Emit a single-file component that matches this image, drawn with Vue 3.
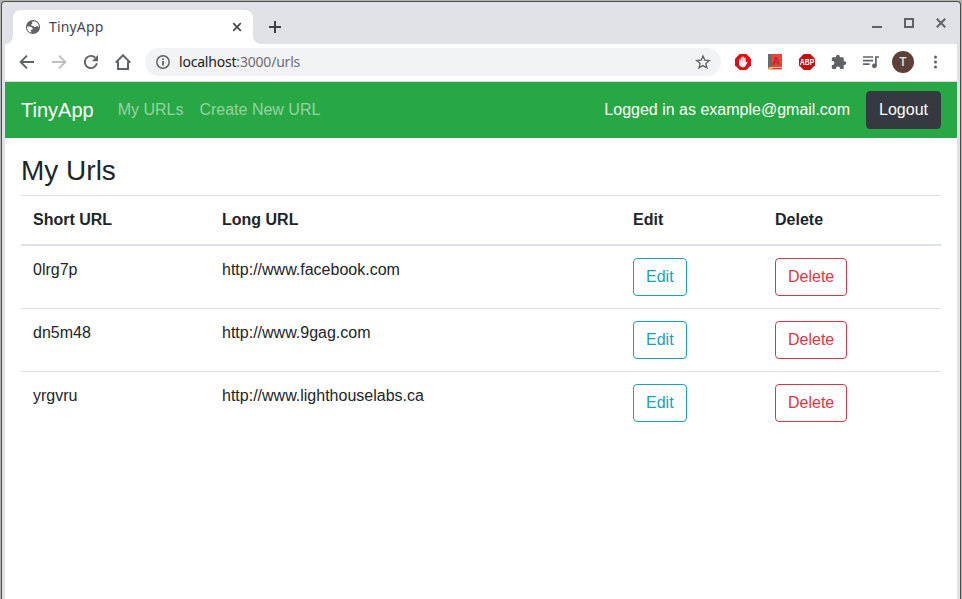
<script setup>
const rows = [
  { id: '0lrg7p', url: 'http://www.facebook.com' },
  { id: 'dn5m48', url: 'http://www.9gag.com' },
  { id: 'yrgvru', url: 'http://www.lighthouselabs.ca' },
]
</script>

<template>
  <div class="desktop">
    <div class="window">
      <header class="tabstrip">
        <div class="tab">
          <svg class="globe" width="16" height="16" viewBox="0 0 16 16">
            <circle cx="8" cy="8" r="7.1" fill="#5f6368" />
            <path d="M9.2 2.3C7.7 2.2 6.8 3 7.2 4.2 7.5 5 6.3 5.1 6 5.9 5.8 6.6 7 6.6 7.7 6.7 8.8 6.8 8.9 8 10 8.1 11.1 8.2 11 7 12.2 7.1L13.9 8.3C14 5.2 12 2.9 9.2 2.3ZM2.1 7.5C3.6 7.2 6.5 7.5 7.5 8.9 8.2 10 7.4 10.7 6.4 10.8 5.4 10.9 5.5 12 6.2 12.8 6.6 13.3 6.3 13.7 5.8 13.6 3.2 12.8 1.8 10.3 2.1 7.5Z" fill="#fff" />
          </svg>
          <span class="tab-title">TinyApp</span>
          <svg class="tab-close" width="10" height="10" viewBox="0 0 10 10">
            <path d="M1.2 1.2l7.6 7.6M8.8 1.2L1.2 8.8" stroke="#45494d" stroke-width="1.7" />
          </svg>
        </div>
        <svg class="plus" width="14" height="14" viewBox="0 0 14 14">
          <path d="M7 1v12M1 7h12" stroke="#3c4043" stroke-width="2" />
        </svg>
        <div class="controls">
          <svg width="12" height="12" viewBox="0 0 12 12"><path d="M1 10h10" stroke="#5f6368" stroke-width="2" /></svg>
          <svg width="12" height="12" viewBox="0 0 12 12"><rect x="2" y="2" width="8" height="8" fill="none" stroke="#5f6368" stroke-width="2" /></svg>
          <svg width="12" height="12" viewBox="0 0 12 12"><path d="M1.8 1.8l8.4 8.4M10.2 1.8l-8.4 8.4" stroke="#5f6368" stroke-width="2" /></svg>
        </div>
      </header>

      <div class="toolbar">
        <div class="nav-icons">
          <svg width="16" height="16" viewBox="0 0 16 16"><path d="M15 8H2.2M8 1.6L1.6 8 8 14.4" fill="none" stroke="#5f6368" stroke-width="1.9" /></svg>
          <svg width="16" height="16" viewBox="0 0 16 16"><path d="M1 8h12.8M8 1.6L14.4 8 8 14.4" fill="none" stroke="#bdc0c3" stroke-width="1.9" /></svg>
          <svg width="16" height="16" viewBox="0 0 16 16">
            <path d="M13.9 9.3A6.1 6.1 0 1 1 12.3 3.7" fill="none" stroke="#5f6368" stroke-width="1.9" />
            <path d="M15 1v6.2H8.8z" fill="#5f6368" />
          </svg>
          <svg width="16" height="16" viewBox="0 0 16 16"><path d="M.7 8.6L8 1.3l7.3 7.3M3 7.5V15h10V7.5" fill="none" stroke="#5f6368" stroke-width="2" /></svg>
        </div>
        <div class="omnibox">
          <svg class="info" width="14" height="14" viewBox="0 0 14 14">
            <circle cx="7" cy="7" r="6.2" fill="none" stroke="#5f6368" stroke-width="1.5" />
            <path d="M7 6.1v4.4M7 3.4v1.7" stroke="#5f6368" stroke-width="1.8" />
          </svg>
          <span class="address"><span class="host">localhost</span>:3000/urls</span>
          <svg class="star" width="16" height="16" viewBox="0 0 16 16">
            <path d="M8 1.9l1.75 4.2 4.55.4-3.45 3 1.05 4.45L8 11.6l-3.9 2.35L5.15 9.5 1.7 6.5l4.55-.4z" fill="none" stroke="#5f6368" stroke-width="1.35" />
          </svg>
        </div>
        <div class="extensions">
          <svg width="16" height="16" viewBox="0 0 16 16">
            <path d="M4.7 0h6.6L16 4.7v6.6L11.3 16H4.7L0 11.3V4.7z" fill="#e40d13" />
            <path d="M4.8 6v3M6.5 3.8V9M8.2 3.1V9M9.9 4.1V9" stroke="#fff" stroke-width="1.35" stroke-linecap="round" />
            <path d="M4.1 7.6h6.5v1.7l.9-1.2c.5-.5 1.2-.1.9.5L10.5 12c-.5.9-1.2 1.3-2.4 1.3-2.5 0-4-1.4-4-3.8z" fill="#fff" />
          </svg>
          <svg class="book" width="16" height="16" viewBox="0 0 16 16">
            <path d="M1 0h4v13l-2 2H1z" fill="#666b70" />
            <path d="M4.5 0H15v13H4.5z" fill="#ee4437" />
            <path d="M4.5 13H15v1H4.5z" fill="#d9cbc6" />
            <path d="M3 14h12v1.4H3z" fill="#d93a30" />
            <path d="M1.6 13h3.8v3l-1.9-1-1.9 1z" fill="#f5bd32" />
            <text x="9" y="11.2" text-anchor="middle" class="book-letter">A</text>
          </svg>
          <svg width="16" height="16" viewBox="0 0 16 16">
            <path d="M4.7 0h6.6L16 4.7v6.6L11.3 16H4.7L0 11.3V4.7z" fill="#c70d0e" />
            <text x="8" y="11" text-anchor="middle" textLength="14.6" lengthAdjust="spacingAndGlyphs" class="abp">ABP</text>
          </svg>
          <svg width="16" height="16" viewBox="0 0 16 16">
            <path d="M.8 4.4Q.8 3.2 2 3.2H5V2.7a1.9 1.9 0 0 1 3.8 0v.5h2.8q1.2 0 1.2 1.2v2.8h.6a1.9 1.9 0 0 1 0 3.8h-.6v2.7q0 1.2-1.2 1.2H9v-.5a2 2 0 0 0-4 0v.5H2q-1.2 0-1.2-1.2V11h.6a2 2 0 0 0 0-4H.8z" fill="#5f6368" />
          </svg>
          <svg width="16" height="16" viewBox="0 0 16 16">
            <path d="M0 3h10M0 6.6h10M0 10.2h6.6M12.9 12V3H16" fill="none" stroke="#5f6368" stroke-width="1.7" />
            <circle cx="11.4" cy="11.8" r="2.4" fill="#5f6368" />
          </svg>
        </div>
        <span class="avatar">T</span>
        <svg class="more" width="4" height="14" viewBox="0 0 4 14">
          <g fill="#5f6368"><circle cx="2.5" cy="2" r="1.5" /><circle cx="2.5" cy="7" r="1.5" /><circle cx="2.5" cy="12" r="1.5" /></g>
        </svg>
      </div>

      <div class="page">
        <nav class="navbar">
          <a class="brand">TinyApp</a>
          <a class="link">My URLs</a>
          <a class="link">Create New URL</a>
          <span class="user">Logged in as example@gmail.com</span>
          <button class="btn dark">Logout</button>
        </nav>
        <main>
          <h3>My Urls</h3>
          <div class="row head">
            <span>Short URL</span><span>Long URL</span><span>Edit</span><span>Delete</span>
          </div>
          <div v-for="row in rows" :key="row.id" class="row">
            <span>{{ row.id }}</span>
            <span>{{ row.url }}</span>
            <div><button class="btn info-btn">Edit</button></div>
            <div><button class="btn danger">Delete</button></div>
          </div>
        </main>
      </div>
    </div>
  </div>
</template>

<style>
body {
  overflow: hidden;
}
</style>

<style scoped>
* {
  box-sizing: border-box;
}
svg {
  display: block;
  flex: none;
}
.desktop {
  height: 599px;
  padding: 1px 1px 0;
  background: #b3b4b0;
  font-family: "Liberation Sans", Arial, sans-serif;
  font-size: 16px;
  line-height: 24px;
  color: #212529;
}
.window {
  height: 598px;
  display: flex;
  flex-direction: column;
  border: 1px solid #4d4e50;
  border-bottom: 0;
  border-radius: 4px 4px 0 0;
  background: #dee1e6;
  padding: 0 3px;
}
.tabstrip {
  height: 42px;
  flex: none;
  display: flex;
  padding-left: 8px;
}
.tab {
  position: relative;
  width: 240px;
  height: 34px;
  margin-top: 8px;
  display: flex;
  align-items: center;
  padding: 0 11px 0 12px;
  border-radius: 8px 8px 0 0;
  background: #fff;
}
.tab::before,
.tab::after {
  content: "";
  position: absolute;
  bottom: 0;
  width: 8px;
  height: 8px;
}
.tab::before {
  left: -8px;
  background: radial-gradient(circle at 0 0, transparent 7.5px, #fff 8.3px);
}
.tab::after {
  right: -8px;
  background: radial-gradient(circle at 100% 0, transparent 7.5px, #fff 8.3px);
}
.tab-title {
  margin-left: 8px;
  font: 14px/20px "Noto Sans", sans-serif;
  letter-spacing: 0.15px;
  color: #45494d;
}
.tab-close {
  margin-left: auto;
}
.plus {
  margin: 18px 0 0 15px;
}
.controls {
  display: flex;
  gap: 20px;
  margin: 15px 10px 0 auto;
}
.toolbar {
  height: 38px;
  flex: none;
  display: flex;
  align-items: center;
  padding: 0 20px 2px 14px;
  background: #fff;
  border-bottom: 1px solid #dadce0;
}
.nav-icons,
.extensions {
  display: flex;
  gap: 16px;
}
.omnibox {
  width: 576px;
  height: 28px;
  margin: 0 14px;
  display: flex;
  align-items: center;
  padding: 0 10px 0 11px;
  border-radius: 14px;
  background: #f1f3f4;
}
.address {
  margin-left: 9px;
  font: 14px/20px "Noto Sans", sans-serif;
  letter-spacing: -0.2px;
  color: #6b6f73;
}
.host {
  color: #202124;
}
.star {
  margin-left: auto;
}
.book-letter {
  font: bold 11px "Liberation Sans", sans-serif;
  fill: #b52e27;
}
.abp {
  font: bold 8.5px "Liberation Sans", sans-serif;
  fill: #fff;
}
.avatar {
  width: 22px;
  height: 22px;
  margin-left: 13px;
  border-radius: 50%;
  background: #5d4037;
  color: #e8e2e0;
  font: 500 12px/22px Roboto, sans-serif;
  text-align: center;
}
.more {
  margin-left: auto;
}
.page {
  flex: 1;
  background: #fff;
}
.navbar {
  height: 56px;
  display: flex;
  align-items: center;
  padding: 0 16px;
  background: #28a745;
}
.brand {
  margin-right: 24px;
  font-size: 20px;
  line-height: 30px;
  color: #fff;
}
.link {
  margin-right: 16px;
  color: rgba(255, 255, 255, 0.5);
}
.user {
  margin: 0 16px 0 auto;
  color: #fff;
}
.btn {
  height: 38px;
  padding: 6px 12px;
  border: 1px solid;
  border-radius: 4px;
  background: transparent;
  font: inherit;
  display: block;
}
.dark {
  background: #343a40;
  border-color: #343a40;
  color: #fff;
}
.info-btn {
  color: #17a2b8;
}
.danger {
  color: #dc3545;
}
main {
  padding: 16px 16px 0;
}
h3 {
  margin: 0 0 8px;
  font-size: 28px;
  font-weight: 500;
  line-height: 33px;
}
.row {
  display: grid;
  grid-template-columns: 189px 411px 142px 178px;
  border-top: 1px solid #dee2e6;
}
.row > * {
  padding: 12px;
}
.head {
  font-weight: 700;
  border-bottom: 2px solid #dee2e6;
}
.head + .row {
  border-top: 0;
}
</style>
